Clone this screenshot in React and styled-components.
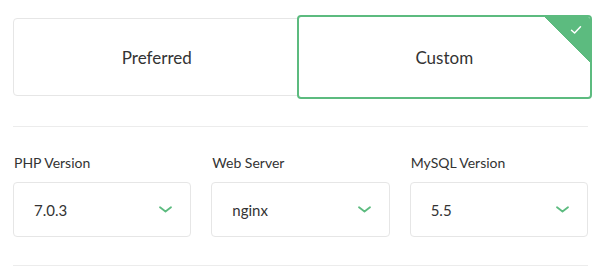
import styled, { createGlobalStyle } from "styled-components";

const GREEN = "#5cbb7f";

const Global = createGlobalStyle`
  body {
    margin: 0;
    background: #fff;
    font-family: Lato, "Open Sans", sans-serif;
    color: #333;
  }
`;

const selects = [
  { id: 1, label: "PHP Version", value: "7.0.3" },
  { id: 2, label: "Web Server", value: "nginx" },
  { id: 3, label: "MySQL Version", value: "5.5" },
];

function Chevron() {
  return (
    <svg width="13" height="7" viewBox="0 0 13 7" fill="none">
      <path d="M1 1.2 L6.5 5.5 L12 1.2" stroke={GREEN} strokeWidth="1.8" strokeLinecap="round" strokeLinejoin="round" />
    </svg>
  );
}

function App() {
  return (
    <Container>
      <Global />
      <Cards>
        <Card>Preferred</Card>
        <Card active>
          Custom
          <Corner>
            <svg width="12" height="10" viewBox="0 0 12 10" fill="none">
              <path d="M1.5 5.2 L4.6 8 L10.5 1.8" stroke="#fff" strokeWidth="1.5" strokeLinecap="round" strokeLinejoin="round" />
            </svg>
          </Corner>
        </Card>
      </Cards>
      <Divider />
      <Fields>
        {selects.map((s) => (
          <Field key={s.id}>
            <Label>{s.label}</Label>
            <Select>
              <span>{s.value}</span>
              <Chevron />
            </Select>
          </Field>
        ))}
      </Fields>
      <Divider />
    </Container>
  );
}

const Container = styled.div`
  width: 596px;
  box-sizing: border-box;
  padding: 18px 8px 0 13px;
`;

const Cards = styled.div`
  display: grid;
  grid-template-columns: 1fr 1fr;
`;

const Card = styled.div`
  position: relative;
  overflow: hidden;
  display: flex;
  align-items: center;
  justify-content: center;
  height: ${(p) => (p.active ? "84px" : "78px")};
  margin: ${(p) => (p.active ? "-3px -4px" : "0")};
  box-sizing: border-box;
  border: ${(p) => (p.active ? `2px solid ${GREEN}` : "1px solid #e6e6e6")};
  border-radius: 4px;
  background: #fff;
  font-size: 17px;
  color: #333;
  z-index: ${(p) => (p.active ? 1 : 0)};
`;

const Corner = styled.div`
  position: absolute;
  top: -1px;
  right: -1px;
  width: 48px;
  height: 48px;
  background: linear-gradient(to bottom left, ${GREEN} 50%, transparent 50%);

  svg {
    position: absolute;
    top: 9px;
    right: 9px;
  }
`;

const Divider = styled.hr`
  margin: 30px 0 0;
  border: 0;
  border-top: 1px solid #ececec;
`;

const Fields = styled.div`
  display: grid;
  grid-template-columns: repeat(3, 1fr);
  gap: 20px;
  padding-top: 26px;
  margin-bottom: -2px;
`;

const Field = styled.div`
  display: flex;
  flex-direction: column;
`;

const Label = styled.div`
  font-size: 14px;
  line-height: 20px;
  color: #333;
  margin-bottom: 9px;
  padding-left: 1px;
`;

const Select = styled.div`
  display: flex;
  align-items: center;
  justify-content: space-between;
  height: 55px;
  box-sizing: border-box;
  padding: 0 18px 0 20px;
  border: 1px solid #e6e6e6;
  border-radius: 4px;
  font-size: 15px;
  color: #333;
`;

export default App;
